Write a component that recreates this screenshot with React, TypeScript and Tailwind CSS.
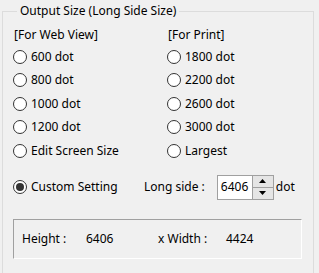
import React from "react";

const webSizes = ["600 dot", "800 dot", "1000 dot", "1200 dot", "Edit Screen Size"];
const printSizes = ["1800 dot", "2200 dot", "2600 dot", "3000 dot", "Largest"];

function Radio({ label, checked = false }: { label: string; checked?: boolean }) {
  return (
    <label className="flex h-[23.5px] items-center">
      <span className="flex h-[14px] w-[14px] shrink-0 items-center justify-center rounded-full border border-[#333333] bg-white">
        {checked && <span className="h-[8px] w-[8px] rounded-full bg-[#333333]" />}
      </span>
      <span className="ml-[4px] whitespace-nowrap">{label}</span>
    </label>
  );
}

function Column({ title, items }: { title: string; items: string[] }) {
  return (
    <div className="flex flex-col">
      <div className="flex h-[21px] items-center pl-px">{title}</div>
      {items.map((item) => (
        <Radio key={item} label={item} />
      ))}
    </div>
  );
}

export default function App() {
  return (
    <div
      className="h-[273px] w-[319px] overflow-hidden bg-[#f0f0f0] text-[12px] leading-none text-black"
      style={{ fontFamily: '"Noto Sans", "Liberation Sans", sans-serif' }}
    >
      <fieldset className="ml-[2px] mt-[4px] h-[290px] w-[312px] border border-b-0 border-[#dcdcdc] pl-[10px] pr-0 pt-[6px]">
        <legend className="ml-[4px] px-[3px] leading-[14px]">Output Size (Long Side Size)</legend>
        <div className="grid grid-cols-[154px_1fr]">
          <Column title="[For Web View]" items={webSizes} />
          <Column title="[For Print]" items={printSizes} />
        </div>
        <div className="mt-[12px] flex h-[25px] items-center">
          <div className="w-[131px]">
            <Radio label="Custom Setting" checked />
          </div>
          <span className="whitespace-nowrap">Long side :</span>
          <div className="ml-[12px] flex h-[25px] w-[57px] border border-[#a0a0a0] bg-white">
            <span className="flex flex-1 items-center pl-[3px]">6406</span>
            <div className="flex w-[21px] flex-col border-l border-[#a0a0a0]">
              <button className="flex flex-1 items-center justify-center border-b border-[#a0a0a0] bg-[#e5e5e5]">
                <svg width="7" height="4" viewBox="0 0 7 4">
                  <path d="M0 4 L3.5 0 L7 4 Z" fill="#000" />
                </svg>
              </button>
              <button className="flex flex-1 items-center justify-center bg-[#e5e5e5]">
                <svg width="7" height="4" viewBox="0 0 7 4">
                  <path d="M0 0 L7 0 L3.5 4 Z" fill="#000" />
                </svg>
              </button>
            </div>
          </div>
          <span className="ml-[2px]">dot</span>
        </div>
        <div className="mt-[19px] flex h-[40px] w-[289px] items-center border border-b-white border-l-[#a0a0a0] border-r-white border-t-[#a0a0a0]">
          <span className="ml-[8px] w-[64px]">Height :</span>
          <span className="w-[72px]">6406</span>
          <span className="w-[68px]">x Width :</span>
          <span>4424</span>
        </div>
      </fieldset>
    </div>
  );
}
